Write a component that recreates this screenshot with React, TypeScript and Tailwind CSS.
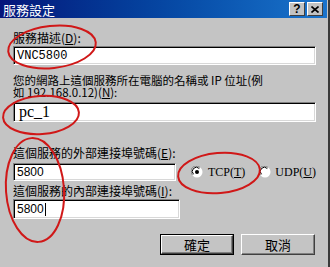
import React from "react";

const CJK = "font-['Noto_Sans_CJK_TC','Liberation_Sans',sans-serif]";

function Sunken({
  className,
  children,
}: {
  className: string;
  children?: React.ReactNode;
}) {
  return (
    <div
      className={`flex items-center border border-t-[#808080] border-l-[#808080] border-b-white border-r-white bg-white shadow-[inset_1px_1px_0_#000,inset_-1px_-1px_0_#d8d8d8] ${className}`}
    >
      {children}
    </div>
  );
}

function Radio({ checked }: { checked?: boolean }) {
  return (
    <svg width="12" height="12" viewBox="0 0 12 12" className="shrink-0">
      <circle cx="6" cy="6" r="5.5" fill="#fff" />
      <path d="M1.5 9 A5 5 0 0 1 9 1.5" stroke="#808080" strokeWidth="1" fill="none" />
      <path d="M2.5 8.3 A4 4 0 0 1 8.3 2.5" stroke="#000" strokeWidth="1" fill="none" />
      {checked && <circle cx="6" cy="6" r="2" fill="#000" />}
    </svg>
  );
}

function WinButton({
  label,
  isDefault,
}: {
  label: string;
  isDefault?: boolean;
}) {
  return (
    <div
      className={`flex h-[21px] w-[74px] items-center justify-center ${
        isDefault ? "border border-black" : ""
      }`}
    >
      <div className="flex h-full w-full items-center justify-center border border-t-white border-l-white border-b-[#404040] border-r-[#404040] shadow-[inset_-1px_-1px_0_#808080] text-[13px] leading-none text-black">
        {label}
      </div>
    </div>
  );
}

function TitleButton({ children }: { children: React.ReactNode }) {
  return (
    <div className="flex h-[14px] w-[16px] items-center justify-center border border-t-white border-l-white border-b-[#404040] border-r-[#404040] bg-[#c3c3c3] font-['Liberation_Sans',sans-serif] text-[12px] font-bold leading-none text-black">
      {children}
    </div>
  );
}

export default function App() {
  return (
    <div
      className={`relative h-[267px] w-[330px] overflow-hidden bg-[#c4c4c4] ${CJK} text-[12px] text-black`}
    >
      <div className="flex h-full flex-col border-r-[2px] border-r-[#3a3a3a] pr-[1px]">
        <div className="flex h-[18px] items-center justify-between bg-gradient-to-r from-[#06157a] to-[#1a74cc] pl-[3px] pr-[4px]">
          <span className="text-[13px] leading-none text-white">服務設定</span>
          <div className="flex items-center gap-[2px]">
            <TitleButton>?</TitleButton>
            <TitleButton>
              <svg width="8" height="7" viewBox="0 0 8 7">
                <path d="M0.5 0.5 L7.5 6.5 M7.5 0.5 L0.5 6.5" stroke="#000" strokeWidth="1.6" />
              </svg>
            </TitleButton>
          </div>
        </div>

        <div className="flex flex-col pl-[13px] pr-[11px]">
          <p className="mt-[13px] h-[15px] leading-[13px]">
            服務描述(<u>D</u>):
          </p>
          <Sunken className="h-[19px] w-full pl-[3px]">
            <span className="font-['Liberation_Mono',monospace] text-[12px] leading-none">
              VNC5800
            </span>
          </Sunken>

          <div className="mt-[10px] flex flex-col text-[11.5px] leading-[11px]">
            <span className="h-[11px]">您的網路上這個服務所在電腦的名稱或 IP 位址(例</span>
            <span className="mt-[1px] h-[11px]">
              如 192.168.0.12)(<u>N</u>):
            </span>
          </div>
          <Sunken className="mt-[4px] h-[20px] w-full pl-[5px]">
            <span className="font-['Liberation_Serif',serif] text-[16px] leading-none">
              pc_1
            </span>
          </Sunken>

          <p className="mt-[24px] h-[17px] leading-[13px]">
            這個服務的外部連接埠號碼(<u>E</u>):
          </p>
          <div className="flex items-center">
            <Sunken className="h-[18px] w-[167px] pl-[3px]">
              <span className="font-['Liberation_Sans',sans-serif] text-[12px] leading-none">
                5800
              </span>
            </Sunken>
            <div className="ml-[15px] flex items-center gap-[5px]">
              <Radio checked />
              <span className="font-['Liberation_Serif',serif] text-[12px] leading-none">
                TCP(<u>T</u>)
              </span>
            </div>
            <div className="ml-[14px] flex items-center gap-[4px]">
              <Radio />
              <span className="font-['Liberation_Serif',serif] text-[12px] leading-none">
                UDP(<u>U</u>)
              </span>
            </div>
          </div>

          <p className="mt-[3px] h-[15px] leading-[13px]">
            這個服務的內部連接埠號碼(<u>I</u>):
          </p>
          <Sunken className="h-[20px] w-[167px] pl-[3px]">
            <span className="font-['Liberation_Sans',sans-serif] text-[12px] leading-none">
              5800
            </span>
            <span className="ml-[1px] h-[13px] w-[1px] bg-black" />
          </Sunken>

          <div className="mt-[15px] flex justify-end gap-[7px] pr-[1px]">
            <WinButton label="確定" isDefault />
            <WinButton label="取消" />
          </div>
        </div>
      </div>

      {/* red annotation marks */}
      <svg
        className="pointer-events-none absolute left-0 top-0"
        width="330"
        height="267"
        viewBox="0 0 330 267"
      >
        <g fill="none" stroke="#d01818" strokeWidth="2">
          <ellipse cx="52" cy="47" rx="44" ry="21" transform="rotate(-6 52 47)" />
          <ellipse cx="41" cy="115" rx="38" ry="19" transform="rotate(-4 41 115)" />
          <ellipse cx="219" cy="173" rx="41" ry="20" transform="rotate(-5 219 173)" />
          <ellipse cx="35" cy="190" rx="29" ry="52" transform="rotate(-4 35 190)" />
        </g>
      </svg>
    </div>
  );
}
